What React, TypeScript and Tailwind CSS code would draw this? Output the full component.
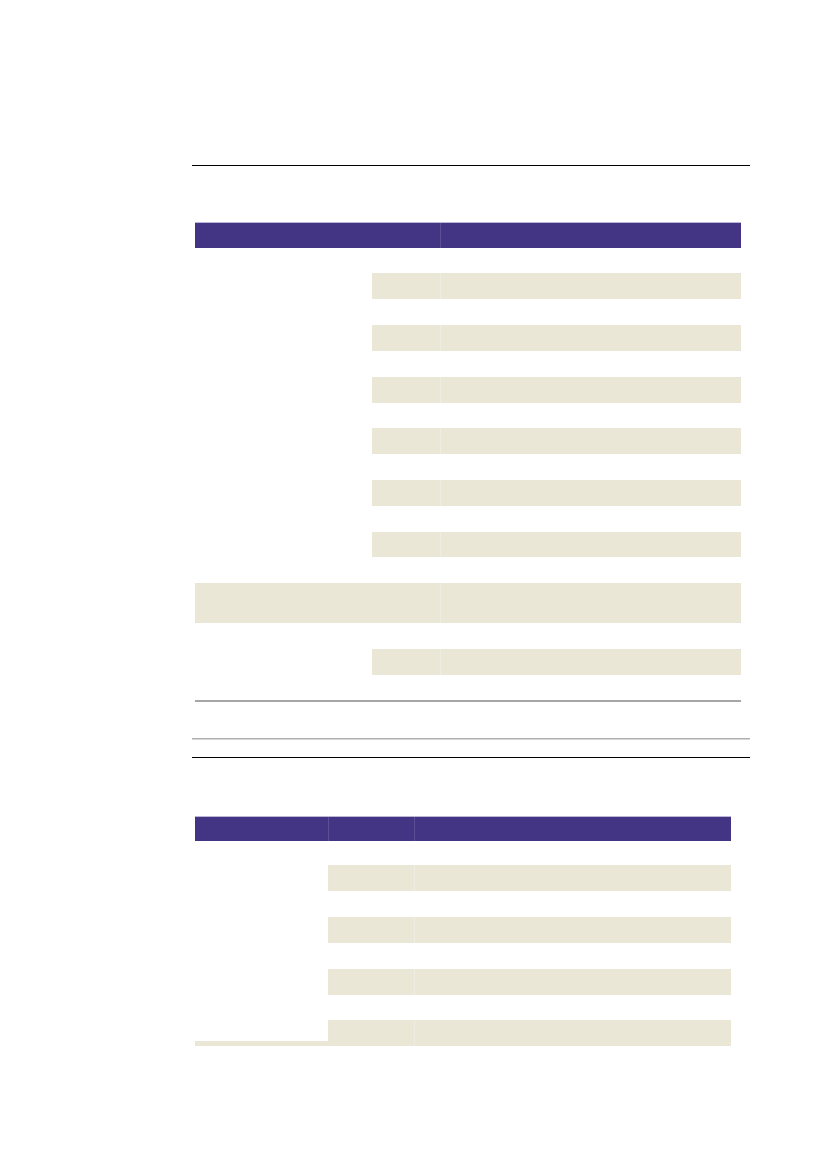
import React from "react";

type Kind = "white" | "cream" | "full" | "strip";
type Row = { h: string; kind: Kind };

const H25 = "h-[25px]";
const H26 = "h-[26px]";
const H24 = "h-[24px]";
const H40 = "h-[40px]";

const t1Rows: Row[] = [
  { h: H25, kind: "white" },
  { h: H26, kind: "cream" },
  { h: H26, kind: "white" },
  { h: H26, kind: "cream" },
  { h: H26, kind: "white" },
  { h: H26, kind: "cream" },
  { h: H25, kind: "white" },
  { h: H26, kind: "cream" },
  { h: H26, kind: "white" },
  { h: H26, kind: "cream" },
  { h: H26, kind: "white" },
  { h: H25, kind: "cream" },
  { h: H26, kind: "white" },
  { h: H40, kind: "full" },
  { h: H26, kind: "white" },
  { h: H26, kind: "cream" },
  { h: H25, kind: "white" },
];

const t2Rows: Row[] = [
  { h: H24, kind: "white" },
  { h: H26, kind: "cream" },
  { h: H26, kind: "white" },
  { h: H26, kind: "cream" },
  { h: H26, kind: "white" },
  { h: H26, kind: "cream" },
  { h: H25, kind: "white" },
  { h: H26, kind: "strip" },
];

type Cols = { c1: string; c2: string; c3: string; c12: string; total: string };

function Table({
  cols,
  headerMerge,
  rows,
  headerH,
}: {
  cols: Cols;
  headerMerge: boolean;
  rows: Row[];
  headerH: string;
}) {
  return (
    <div className={`flex flex-col ${cols.total}`}>
      <div className={`flex bg-[#433583] border-t border-[#bdb6d6] ${headerH}`}>
        {headerMerge ? (
          <div className={`h-full ${cols.c12}`} />
        ) : (
          <>
            <div className={`h-full ${cols.c1}`} />
            <div className={`h-full border-l border-[#5b4f98] ${cols.c2}`} />
          </>
        )}
        <div className={`h-full border-l border-[#5b4f98] ${cols.c3}`} />
      </div>
      {rows.map((r, i) => (
        <div key={i} className={`flex ${r.h}`}>
          <div
            className={`h-full flex flex-col justify-end ${cols.c1} ${
              r.kind === "full" ? "bg-[#ebe7d7]" : ""
            }`}
          >
            {r.kind === "strip" && <div className="h-[5px] bg-[#ebe7d7]" />}
          </div>
          <div className={`h-full ${cols.c2} ${r.kind === "white" ? "" : "bg-[#ebe7d7]"}`} />
          <div
            className={`h-full ${cols.c3} ${
              r.kind === "white" ? "" : "bg-[#ebe7d7] border-l border-[#efece2]"
            }`}
          />
        </div>
      ))}
    </div>
  );
}

const cols1: Cols = {
  c1: "w-[177px]",
  c2: "w-[68px]",
  c3: "w-[301px]",
  c12: "w-[245px]",
  total: "w-[546px]",
};

const cols2: Cols = {
  c1: "w-[133px]",
  c2: "w-[86px]",
  c3: "w-[317px]",
  c12: "w-[219px]",
  total: "w-[536px]",
};

export default function App() {
  return (
    <div className="w-[827px] h-[1169px] bg-white font-['Liberation_Sans',sans-serif]">
      <div className="flex flex-col pl-[192px] pt-[165px]">
        <div className="w-[558px] h-px bg-black" />
        <div className="pl-[3px] pt-[56px]">
          <Table cols={cols1} headerMerge rows={t1Rows} headerH="h-[26px]" />
          <div className="w-[546px] h-[2px] bg-[#a6a6a6]" />
        </div>
        <div className="mt-[36px] w-[558px] h-[2px] bg-[#b0b0b0] border-b border-[#d6d6d6]" />
        <div className="mt-[17px] w-[558px] h-px bg-black" />
        <div className="pl-[3px] pt-[58px]">
          <Table cols={cols2} headerMerge={false} rows={t2Rows} headerH="h-[25px]" />
        </div>
      </div>
    </div>
  );
}
